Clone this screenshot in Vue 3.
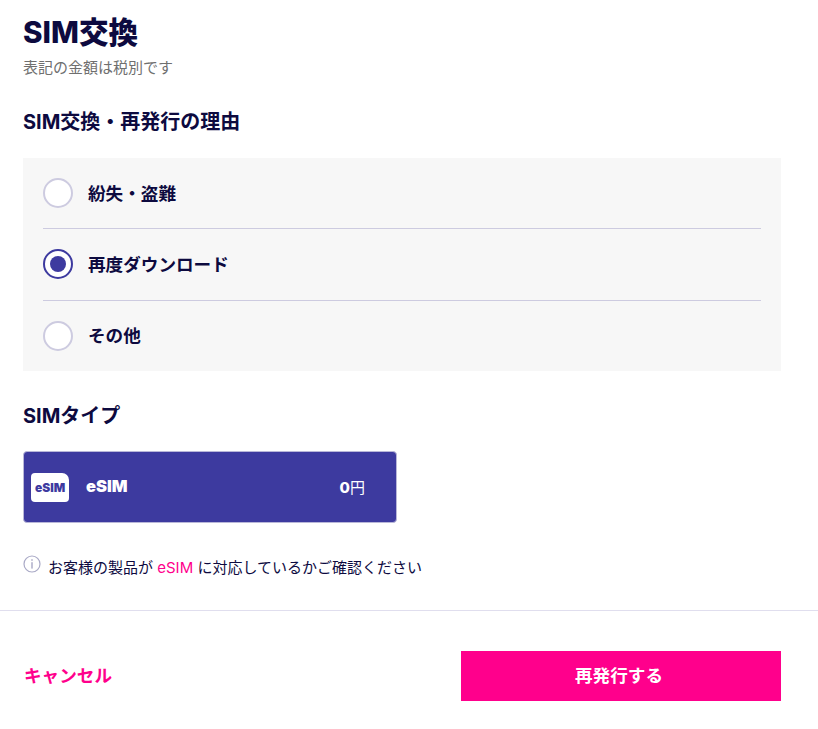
<script setup>
import { ref } from 'vue'

const reasons = ['紛失・盗難', '再度ダウンロード', 'その他']
const selected = ref('再度ダウンロード')
</script>

<template>
  <main class="page">
    <div class="content">
      <h1 class="title">SIM交換</h1>
      <p class="note">表記の金額は税別です</p>

      <h2 class="section first">SIM交換・再発行の理由</h2>
      <div class="reasons">
        <label
          v-for="reason in reasons"
          :key="reason"
          class="reason"
          @click="selected = reason"
        >
          <span class="radio" :class="{ checked: selected === reason }"></span>
          <span class="reason-text">{{ reason }}</span>
        </label>
      </div>

      <h2 class="section second">SIMタイプ</h2>
      <div class="sim-card">
        <span class="sim-icon">eSIM</span>
        <span class="sim-name">eSIM</span>
        <span class="sim-price"><b>0</b>円</span>
      </div>

      <p class="info">
        <svg class="info-icon" width="18" height="18" viewBox="0 0 18 18" fill="none">
          <circle cx="9" cy="9" r="8" stroke="#a9a9c6" stroke-width="1.2" />
          <rect x="8.3" y="4.2" width="1.4" height="1.6" fill="#a9a9c6" />
          <rect x="8.3" y="7.2" width="1.4" height="6.4" fill="#a9a9c6" />
        </svg>
        <span>お客様の製品が <span class="pink">eSIM</span> に対応しているかご確認ください</span>
      </p>
    </div>

    <div class="footer">
      <a class="cancel">キャンセル</a>
      <button class="submit">再発行する</button>
    </div>
  </main>
</template>

<style scoped>
.page {
  width: 818px;
  height: 729px;
  overflow: hidden;
  background: #fff;
  color: #0d0a3f;
  font-family: Inter, "Noto Sans CJK JP", sans-serif;
}
.content {
  padding: 13px 37px 0 23px;
  height: 611px;
  box-sizing: border-box;
  border-bottom: 1px solid #e0deee;
}
.title {
  margin: 0;
  font-size: 29.6px;
  line-height: 38px;
  font-weight: 800;
}
.note {
  margin: 7px 0 0;
  font-size: 15px;
  line-height: 20px;
  color: #6f6f6f;
}
.section {
  margin: 0;
  font-size: 20px;
  line-height: 28px;
  font-weight: 700;
}
.section.first {
  margin-top: 30px;
}
.section.second {
  margin-top: 31px;
}
.reasons {
  margin-top: 22px;
  padding: 0 20px;
  background: #f7f7f7;
}
.reason {
  display: flex;
  align-items: center;
  gap: 15px;
  height: 70.4px;
  border-bottom: 1px solid #cdcbe0;
}
.reason:last-child {
  border-bottom: none;
}
.radio {
  display: flex;
  align-items: center;
  justify-content: center;
  width: 30px;
  height: 30px;
  margin-top: -0.4px;
  box-sizing: border-box;
  border: 2px solid #cdcbe0;
  border-radius: 50%;
  background: #fff;
}
.radio.checked {
  border-color: #3d3a9f;
}
.radio.checked::after {
  content: "";
  width: 16px;
  height: 16px;
  border-radius: 50%;
  background: #3d3a9f;
}
.reason-text {
  font-size: 17.6px;
  line-height: 24px;
  font-weight: 700;
  margin-top: 1px;
}
.sim-card {
  display: flex;
  align-items: center;
  width: 374px;
  height: 72px;
  margin-top: 21px;
  padding: 0 31px 0 7px;
  box-sizing: border-box;
  background: #3d3a9f;
  border: 1px solid #b9b7d8;
  border-radius: 4px;
  color: #fff;
}
.sim-icon {
  display: flex;
  align-items: center;
  justify-content: center;
  width: 38px;
  height: 29px;
  background: #fff;
  border-radius: 4px 7px 4px 4px;
  color: #3d3a9f;
  font-size: 12px;
  font-weight: 900;
}
.sim-name {
  margin-left: 17px;
  font-size: 16.5px;
  font-weight: 900;
  margin-top: -2px;
}
.sim-price {
  margin-left: auto;
  font-size: 15px;
  margin-top: -2px;
}
.sim-price b {
  font-weight: 800;
}
.info {
  display: flex;
  align-items: center;
  gap: 7px;
  margin: 34px 0 0;
  font-size: 15px;
  line-height: 22px;
}
.info-icon {
  margin-top: -8px;
}
.pink {
  color: #ff008c;
}
.footer {
  display: flex;
  align-items: center;
  justify-content: space-between;
  padding: 40px 37px 0 24px;
}
.cancel {
  font-size: 17.6px;
  line-height: 24px;
  font-weight: 700;
  color: #ff008c;
}
.submit {
  width: 320px;
  height: 50px;
  padding: 0 4px 4px 0;
  border: none;
  background: #ff008c;
  color: #fff;
  font-family: inherit;
  font-size: 17.6px;
  font-weight: 700;
}
</style>
